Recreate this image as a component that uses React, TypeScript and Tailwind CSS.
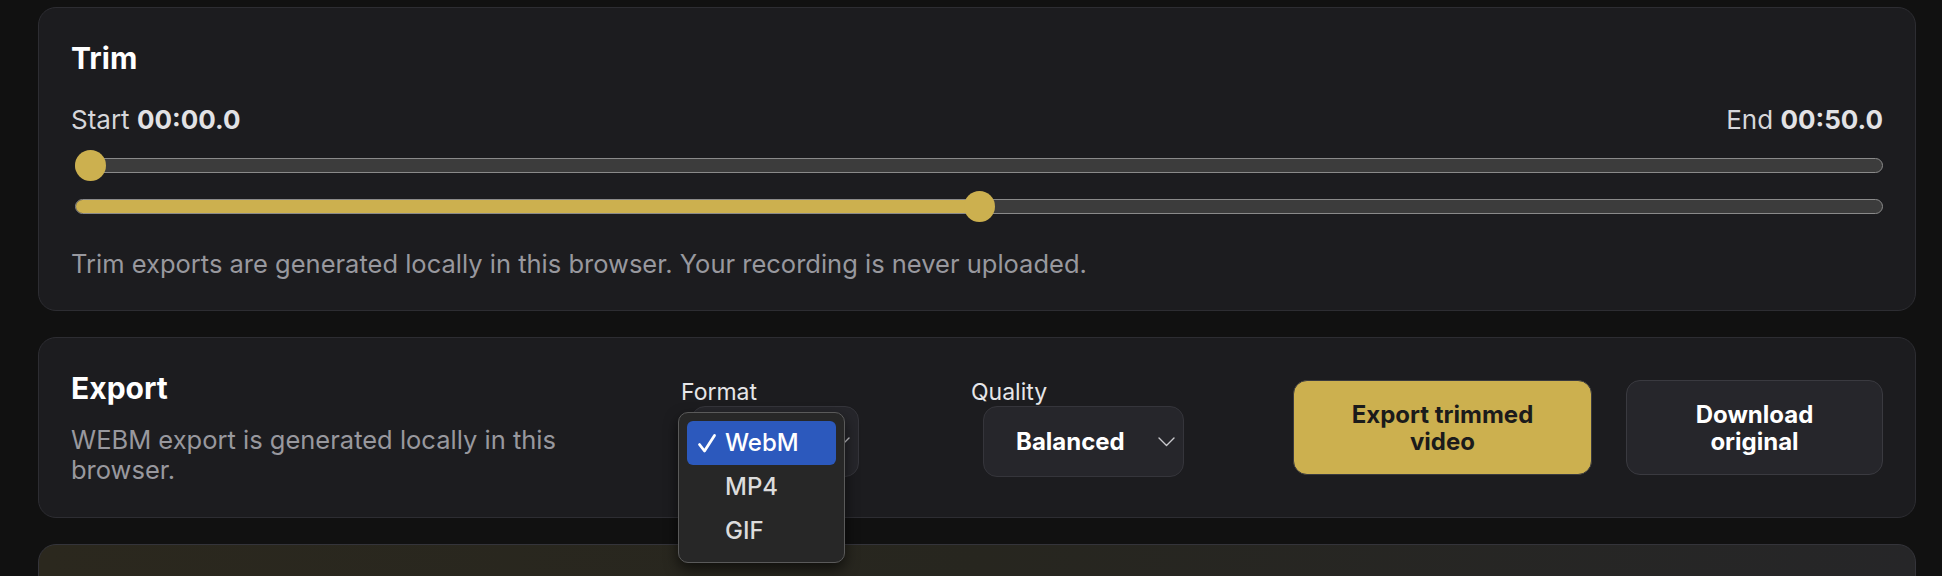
import React from "react";

const YELLOW = "#ccb04f";

function RangeTrack({ value, filled }: { value: number; filled?: boolean }) {
  // thumb is 31px, travel is track width minus thumb
  const pos = `calc(${value} * (100% - 31px))`;
  return (
    <div className="relative ml-[4px] h-[31px]">
      <div className="absolute left-0 right-0 top-[8px] h-[15px] overflow-hidden rounded-full border-[1.5px] border-[#8a8a8a] bg-[#3c3c3c]">
        {filled && (
          <div
            className="h-full bg-[#ccb04f]"
            style={{ width: `calc(${value} * (100% - 31px) + 14px)` }}
          />
        )}
      </div>
      <div
        className="absolute top-0 h-[31px] w-[31px] rounded-full"
        style={{ left: pos, backgroundColor: YELLOW }}
      />
    </div>
  );
}

function Chevron() {
  return (
    <svg width="17" height="10" viewBox="0 0 17 10" fill="none">
      <path d="M1 1l7.5 7.5L16 1" stroke="#c9c9cc" strokeWidth="1.4" strokeLinecap="round" strokeLinejoin="round" />
    </svg>
  );
}

function FormatMenu() {
  const items = ["WebM", "MP4", "GIF"];
  return (
    <div className="absolute left-[-13px] top-[6px] z-10 h-[151px] w-[167px] rounded-[10px] border-[1.5px] border-[#5a5a5a] bg-[#272727] px-[8px] pt-[8px] shadow-[0_6px_14px_rgba(0,0,0,0.6)]">
      {items.map((item, i) => (
        <div
          key={item}
          className={`flex h-[44px] items-center rounded-[6px] ${i === 0 ? "bg-[#2c59bd] text-white" : "text-[#dcdcdc]"}`}
        >
          <span className="flex w-[38px] justify-center pl-[2px]">
            {i === 0 && (
              <svg width="20" height="20" viewBox="0 0 20 20" fill="none">
                <path d="M2.5 11.5l5 6.5L17.5 2.5" stroke="#ffffff" strokeWidth="2.8" strokeLinecap="round" strokeLinejoin="round" />
              </svg>
            )}
          </span>
          <span className="text-[24px] font-medium leading-none">{item}</span>
        </div>
      ))}
    </div>
  );
}

export default function App() {
  return (
    <div className="flex h-[576px] flex-col gap-[26px] overflow-hidden bg-[#111111] pl-[38px] pr-[26px] pt-[7px] font-['Inter',sans-serif]">
      {/* Trim */}
      <section className="rounded-[18px] border border-[#2d2d32] bg-[#1c1c1f] px-8 pb-[31px] pt-8">
        <h2 className="text-[30px] font-bold leading-9 text-white">Trim</h2>
        <div className="mt-[28px] flex justify-between text-[26px] leading-8 text-[#d6d6da]">
          <span>
            Start <b className="font-bold text-[#e2e2e5]">00:00.0</b>
          </span>
          <span>
            End <b className="font-bold text-[#e2e2e5]">00:50.0</b>
          </span>
        </div>
        <div className="mt-[14px]">
          <RangeTrack value={0} />
        </div>
        <div className="mt-[10px]">
          <RangeTrack value={0.5} filled />
        </div>
        <p className="mt-[27px] text-[25.5px] leading-[30px] text-[#98989e]">
          Trim exports are generated locally in this browser. Your recording is never uploaded.
        </p>
      </section>

      {/* Export */}
      <section className="flex items-center rounded-[18px] border border-[#2d2d32] bg-[#1c1c1f] px-8 py-8">
        <div className="flex-1">
          <h2 className="text-[30px] font-bold leading-9 text-white">Export</h2>
          <p className="mt-[19px] max-w-[520px] text-[25.5px] leading-[30px] text-[#98989e]">
            WEBM export is generated locally in this browser.
          </p>
        </div>

        <div className="w-[178px]">
          <div className="text-[23px] leading-7 text-[#e6e6e8]">Format</div>
          <div className="relative ml-[10px] w-[168px]">
            <div className="flex h-[71px] items-center justify-between rounded-[14px] border border-[#35353b] bg-[#26262b] pl-[32px] pr-[8px]">
              <span className="text-[24px] font-bold text-white">WebM</span>
              <Chevron />
            </div>
            <FormatMenu />
          </div>
        </div>

        <div className="ml-[112px] w-[213px]">
          <div className="text-[23px] leading-7 text-[#e6e6e8]">Quality</div>
          <div className="ml-[12px] flex h-[71px] w-[201px] items-center justify-between rounded-[14px] border border-[#35353b] bg-[#26262b] pl-[32px] pr-[8px]">
            <span className="text-[24px] font-bold text-white">Balanced</span>
            <Chevron />
          </div>
        </div>

        <button
          type="button"
          className="ml-[109px] h-[95px] w-[299px] rounded-[14px] border border-[#3a3a3e] bg-[#ccb04f] px-10 text-[24px] font-bold leading-[27px] text-[#1b1b1b]"
        >
          Export trimmed video
        </button>
        <button
          type="button"
          className="ml-[34px] h-[95px] w-[257px] rounded-[14px] border border-[#3a3a40] bg-[#26262b] px-8 text-[24px] font-bold leading-[27px] text-white"
        >
          Download original
        </button>
      </section>

      {/* Preview card peeking from below */}
      <section className="h-[140px] shrink-0 rounded-[18px] border border-[#34343a] bg-gradient-to-r from-[#2b281e] via-[#27261f] to-[#262628]" />
    </div>
  );
}
